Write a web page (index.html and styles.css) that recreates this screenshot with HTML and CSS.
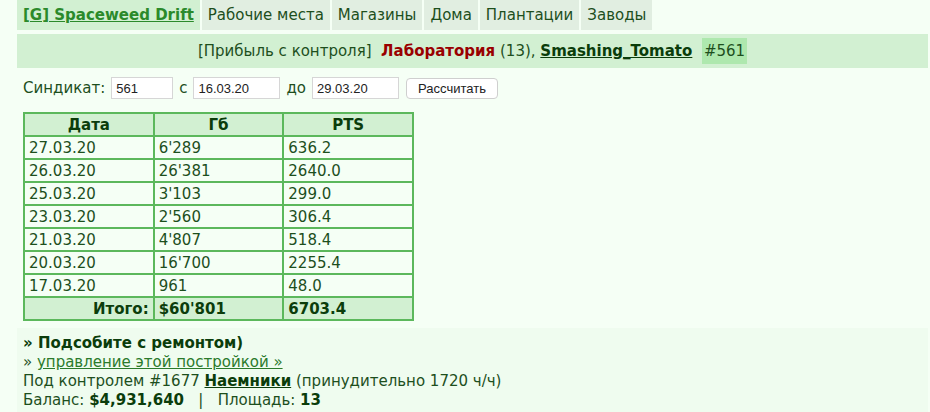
FILE: index.html
```html
<!DOCTYPE html>
<html lang="ru">
<head>
    <meta charset="UTF-8">
    <title>Лаборатория - Прибыль с контроля</title>
    <link rel="stylesheet" href="styles.css">
</head>
<body>
    <div class="page">
        <ul class="tabs">
            <li class="tab active"><a href="#">[G] Spaceweed Drift</a></li>
            <li class="tab">Рабочие места</li>
            <li class="tab">Магазины</li>
            <li class="tab">Дома</li>
            <li class="tab">Плантации</li>
            <li class="tab">Заводы</li>
        </ul>

        <div class="title-bar">
            [Прибыль с контроля]&nbsp; <b class="lab">Лаборатория</b> (13), <a class="owner" href="#">Smashing_Tomato</a>&nbsp; <span class="synd">#561</span>
        </div>

        <form class="filter">
            <label>Синдикат:</label>
            <input type="text" class="in-synd" value="561">
            <label>с</label>
            <input type="text" class="in-date" value="16.03.20">
            <label>до</label>
            <input type="text" class="in-date" value="29.03.20">
            <button type="button" class="calc-button">Рассчитать</button>
        </form>

        <table class="stats">
            <thead>
                <tr><th>Дата</th><th>Гб</th><th>PTS</th></tr>
            </thead>
            <tbody>
                <tr><td>27.03.20</td><td>6'289</td><td>636.2</td></tr>
                <tr><td>26.03.20</td><td>26'381</td><td>2640.0</td></tr>
                <tr><td>25.03.20</td><td>3'103</td><td>299.0</td></tr>
                <tr><td>23.03.20</td><td>2'560</td><td>306.4</td></tr>
                <tr><td>21.03.20</td><td>4'807</td><td>518.4</td></tr>
                <tr><td>20.03.20</td><td>16'700</td><td>2255.4</td></tr>
                <tr><td>17.03.20</td><td>961</td><td>48.0</td></tr>
            </tbody>
            <tfoot>
                <tr><td class="total-label">Итого:</td><td>$60'801</td><td>6703.4</td></tr>
            </tfoot>
        </table>

        <div class="info">
            <div class="help">» Подсобите с ремонтом)</div>
            <div>» <a href="#" class="manage">управление этой постройкой »</a></div>
            <div>Под контролем #1677 <a href="#" class="owner">Наемники</a> (принудительно 1720 ч/ч)</div>
            <div>Баланс: <b>$4,931,640</b> &nbsp; | &nbsp; Площадь: <b>13</b></div>
        </div>
    </div>
</body>
</html>
```

FILE: styles.css
```css
body {
    margin: 0;
    background-color: #f5fff5;
    color: #1d4f1d;
    font-family: "DejaVu Sans", Verdana, sans-serif;
    font-size: 15px;
}

.page {
    margin: 0 2px 0 17px;
}

.tabs {
    list-style: none;
    margin: 0;
    padding: 0;
    display: flex;
    gap: 2px;
}

.tab {
    background-color: #e1eee1;
    padding: 0 6px;
    height: 30px;
    line-height: 30px;
    color: #1d4f1d;
}

.tab.active {
    background-color: #d2f0d2;
}

.tab.active a {
    color: #2b8a2b;
    font-weight: bold;
}

.title-bar {
    margin-top: 4px;
    background-color: #d2f0d2;
    height: 34px;
    line-height: 34px;
    text-align: center;
}

.lab {
    color: #990000;
}

.owner {
    color: #0b3d0b;
    font-weight: bold;
}

.synd {
    background-color: #aee8ae;
    padding: 4px 2px;
}

.filter {
    display: flex;
    align-items: center;
    gap: 6px;
    padding: 9px 6px 0;
    height: 22px;
}

.filter input {
    font-family: "Liberation Sans", Arial, sans-serif;
    font-size: 13px;
    color: #222;
    height: 22px;
    box-sizing: border-box;
    border: 1px solid #d6d6d6;
    padding: 0 4px;
    background: #fff;
}

.in-synd {
    width: 62px;
}

.in-date {
    width: 87px;
}

.calc-button {
    font-family: "Liberation Sans", Arial, sans-serif;
    font-size: 13px;
    color: #222;
    height: 21px;
    width: 92px;
    padding: 0;
    background: #fff;
    border: 1px solid #cfcfcf;
    border-radius: 4px;
    margin-left: 1px;
}

.stats {
    margin: 13px 0 0 6px;
    border-collapse: collapse;
    width: 391px;
    table-layout: fixed;
}

.stats th,
.stats td {
    border: 2px solid #5cb85c;
    height: 21px;
    padding: 0 4px;
    text-align: left;
}

.stats th {
    background-color: #d2f0d2;
    text-align: center;
    color: #0b3d0b;
}

.stats tfoot td {
    background-color: #d2f0d2;
    font-weight: bold;
    color: #0b3d0b;
}

.stats .total-label {
    text-align: right;
}

.info {
    margin-top: 7px;
    padding: 6px 6px 20px;
    background-color: #effcef;
    line-height: 19px;
}

.info b {
    color: #0b3d0b;
}

.help {
    font-weight: bold;
    color: #0b3d0b;
}

.manage {
    color: #2b7a2b;
}
```
